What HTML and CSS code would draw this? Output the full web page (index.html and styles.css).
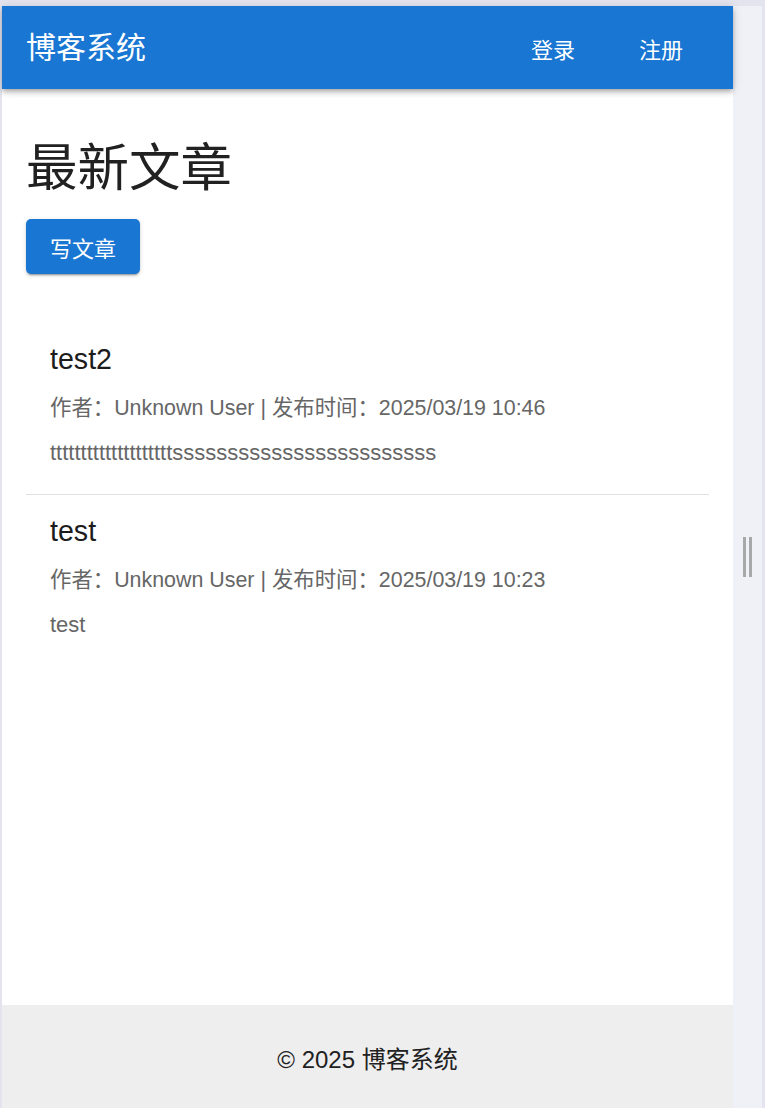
FILE: index.html
```html
<!DOCTYPE html>
<html lang="zh-CN">
<head>
<meta charset="utf-8">
<title>博客系统</title>
<link rel="stylesheet" href="styles.css">
</head>
<body>
<div class="frame">
  <div class="page">
    <header class="appbar">
      <div class="brand">博客系统</div>
      <nav class="nav">
        <a class="nav-btn">登录</a>
        <a class="nav-btn">注册</a>
      </nav>
    </header>
    <main class="content">
      <h1 class="heading">最新文章</h1>
      <button class="write-btn">写文章</button>
      <ul class="posts">
        <li class="post">
          <div class="post-title">test2</div>
          <div class="post-meta">作者：Unknown User | 发布时间：2025/03/19 10:46</div>
          <div class="post-body">ttttttttttttttttttttssssssssssssssssssssssss</div>
        </li>
        <li class="post">
          <div class="post-title">test</div>
          <div class="post-meta">作者：Unknown User | 发布时间：2025/03/19 10:23</div>
          <div class="post-body">test</div>
        </li>
      </ul>
    </main>
    <footer class="footer">© 2025 博客系统</footer>
  </div>
  <aside class="side">
    <div class="handle"><span></span><span></span></div>
  </aside>
</div>
</body>
</html>
```

FILE: styles.css
```css
html, body {
  margin: 0;
  padding: 0;
  height: 100%;
  overflow: hidden;
}
body {
  background: #e3e4ee;
  font-family: "Liberation Sans", "Noto Sans CJK SC", sans-serif;
}
.frame {
  display: flex;
  height: 1102px;
  margin-top: 6px;
  margin-left: 2px;
  margin-right: 3px;
}
.page {
  width: 731px;
  background: #ffffff;
  display: flex;
  flex-direction: column;
}
.appbar {
  height: 83px;
  flex: none;
  background: #1976d2;
  color: #ffffff;
  display: flex;
  align-items: center;
  padding: 0 24px;
  box-shadow: 0 2px 4px -1px rgba(0,0,0,0.2), 0 4px 5px 0 rgba(0,0,0,0.14), 0 1px 10px 0 rgba(0,0,0,0.12);
  position: relative;
  z-index: 1;
}
.brand {
  font-size: 30px;
  line-height: 1;
  flex: 1;
}
.nav {
  display: flex;
  gap: 20px;
  margin-right: 4px;
}
.nav-btn {
  font-size: 22px;
  padding: 6px 22px;
  color: #ffffff;
}
.content {
  flex: 1;
  padding: 0 24px;
}
.heading {
  margin: 49px 0 0;
  font-size: 51.5px;
  line-height: 61px;
  font-weight: 400;
  color: #212121;
}
.write-btn {
  margin-top: 20px;
  height: 55px;
  padding: 0 24px;
  border: none;
  border-radius: 5px;
  background: #1976d2;
  color: #ffffff;
  font-family: inherit;
  font-size: 22px;
  box-shadow: 0 3px 1px -2px rgba(0,0,0,0.2), 0 2px 2px 0 rgba(0,0,0,0.14), 0 1px 5px 0 rgba(0,0,0,0.12);
  display: block;
}
.posts {
  list-style: none;
  margin: 49px 0 0;
  padding: 0;
}
.post {
  padding: 18px 24px 25px;
  border-bottom: 1px solid #e0e0e0;
}
.post:last-child {
  border-bottom: none;
}
.post-title {
  font-size: 28.6px;
  line-height: 36px;
  color: #1c1c1c;
}
.post-meta {
  margin-top: 16px;
  font-size: 21.4px;
  line-height: 30px;
  color: #666666;
}
.post-body {
  margin-top: 14px;
  font-size: 22px;
  line-height: 32px;
  color: #666666;
}
.footer {
  flex: none;
  height: 103px;
  background: #eeeeee;
  color: #212121;
  font-size: 24px;
  display: flex;
  justify-content: center;
  align-items: center;
  padding-top: 2px;
  box-sizing: border-box;
}
.side {
  flex: 1;
  background: #f0f1f7;
  display: flex;
  align-items: center;
  justify-content: flex-start;
}
.handle {
  display: flex;
  gap: 3px;
  margin-left: 10px;
}
.handle span {
  display: block;
  width: 3px;
  height: 40px;
  background: #a8a8a8;
}
```
